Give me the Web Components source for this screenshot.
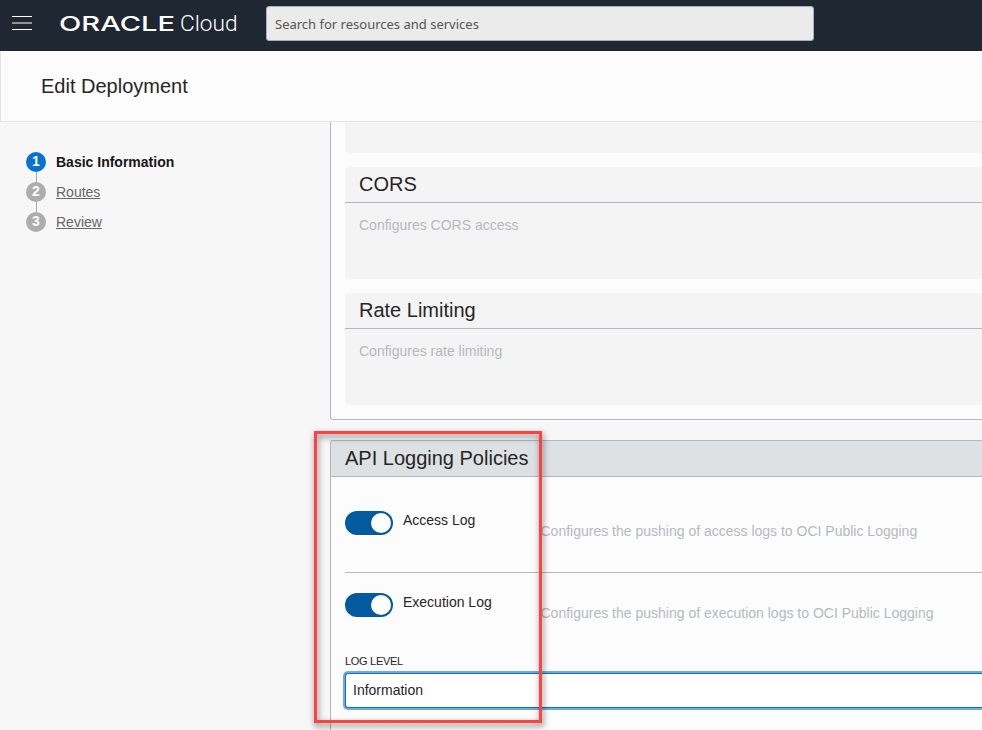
<!DOCTYPE html>
<html lang="en">
<head>
<meta charset="utf-8">
<title>Edit Deployment</title>
<style>
html,body{margin:0;height:730px;overflow:hidden;background:#f7f7f7}
body{font:14px/20px "Liberation Sans",Arial,sans-serif;color:#262626}
</style>
</head>
<body>
<deployment-page></deployment-page>
<script>
const define = (name, markup) => {
  const template = document.createElement('template');
  template.innerHTML = `<style>*{box-sizing:border-box}:host{display:block;box-sizing:border-box}</style>` + markup;
  customElements.define(name, class extends HTMLElement {
    constructor() {
      super();
      this.attachShadow({mode: 'open'}).append(template.content.cloneNode(true));
    }
  });
};

define('cloud-header', `
<style>
:host{display:flex;height:51px;background:#1e2732;padding:6px 0 0 12px;align-items:flex-start}
.menu{display:block;width:20px;height:16px;margin-top:9px}
.brand{display:block;width:190px;height:30px;margin:2px 0 0 22px}
.search{width:548px;height:35px;margin-left:22px;border:1px solid #a9afbd;border-radius:3px;background:#ebebeb;
 padding:0 8px;font:13px/34px "Noto Sans","Open Sans",sans-serif;color:#565656}
</style>
<svg class="menu" viewBox="0 0 20 16"><path d="M0 1.5h20M0 14.5h20" stroke="#fff"/><path d="M0 8h20" stroke="#8f9499" stroke-width="2"/></svg>
<svg class="brand" viewBox="54 8 190 30" fill="#fff">
 <text x="59" y="31" font-family="Inter,sans-serif" font-size="20.6" font-weight="500" textLength="116" lengthAdjust="spacingAndGlyphs">ORACLE</text>
 <text x="180" y="31" font-family="Roboto,sans-serif" font-size="22.5" font-weight="300" textLength="57.5" lengthAdjust="spacingAndGlyphs">Cloud</text>
</svg>
<div class="search">Search for resources and services</div>`);

define('page-title', `
<style>
:host{height:71px;background:#fcfcfc;border-left:1px solid #e4e4e4;border-bottom:1px solid #e4e4e4;padding:0 40px}
h1{margin:0;font-size:20px;line-height:70px;font-weight:400}
</style><h1><slot></slot></h1>`);

define('wizard-step', `
<style>
:host{display:flex;height:30px;align-items:flex-start;gap:10px;color:#666}
.rail{display:flex;flex-direction:column;align-items:center;width:20px;height:30px}
.num{width:20px;height:20px;border-radius:50%;background:#adadad;color:#fff;font-weight:700;text-align:center;line-height:19px;flex:none}
.line{width:1px;height:10px;background:#a8a8a8}
.label{text-decoration:underline;text-underline-offset:1px}
:host([current]) .num{background:#0572ce}
:host([current]) .label{font-weight:700;color:#161616;text-decoration:none}
:host([last]) .line{display:none}
</style>
<div class="rail"><div class="num"><slot name="number"></slot></div><div class="line"></div></div>
<span class="label"><slot></slot></span>`);

define('policy-card', `
<style>
:host{height:112px;background:#f4f4f4;border-radius:3px;flex:none}
h2{margin:0;height:36px;padding:0 14px;font-size:20px;line-height:34px;font-weight:400;border-bottom:1px solid #b0b8c1}
p{margin:0;padding:12px 14px;color:#b4b9c1}
</style><h2><slot name="title"></slot></h2><p><slot></slot></p>`);

define('form-panel', `
<style>
:host{border:1px solid #b0b8c1;border-right:0;border-radius:3px 0 0 3px;background:#fcfcfc;overflow:hidden}
</style><slot></slot>`);

define('panel-heading', `
<style>
:host{height:36px;padding-left:14px;background:#dde1e4;border-bottom:1px solid #b0b8c1;font-size:20px;line-height:34px}
</style><slot></slot>`);

define('log-toggle', `
<style>
:host{display:grid;grid-template-columns:48px 128px 1fr;column-gap:10px;height:82px;align-items:start;white-space:nowrap}
.switch{display:flex;justify-content:flex-end;align-items:center;width:48px;height:24px;padding-right:2px;border-radius:12px;background:#045a9f}
.knob{width:20px;height:20px;border-radius:50%;background:#fff}
.name{margin-top:-1px}
.hint{margin:10px 0 0 -0.5px;color:#b4b9c1}
</style>
<div class="switch"><div class="knob"></div></div>
<div class="name"><slot></slot></div>
<div class="hint"><slot name="hint"></slot></div>`);

define('select-field', `
<style>
label{display:block;font-size:11px;line-height:14px;height:19px;letter-spacing:-.3px}
.control{height:35px;border:1px solid #0572ce;border-right:0;border-radius:3px 0 0 3px;box-shadow:0 0 0 2px #76a8dd;background:#fff;padding-left:7px;line-height:33px}
</style>
<label><slot name="label"></slot></label><div class="control"><slot></slot></div>`);

define('focus-frame', `
<style>
:host{position:absolute;left:314px;top:431px;width:228px;height:292px;border:3px solid #fd4242;
 filter:drop-shadow(1px 3px 3px rgba(0,0,0,.55))}
</style>`);

define('deployment-page', `
<style>
:host{width:982px;height:730px;overflow:hidden;position:relative;background:#f7f7f7}
.body{display:grid;grid-template-columns:304px 1fr;padding-left:26px;height:608px;overflow:hidden}
nav{padding-top:30px}
main{display:flex;flex-direction:column;gap:20px}
.policies{height:298px;flex:none;border-top:0;border-radius:0 0 0 3px}
.stack{display:flex;flex-direction:column;gap:14px;padding-left:14px}
.tail{height:31px;background:#f4f4f4;border-radius:0 0 0 3px}
.logging{height:320px;flex:none}
.fields{padding:34px 0 0 14px}
.rule{height:1px;background:#b0b8c1;margin:-21px 0 20px}
select-field{margin-top:-21px}
</style>
<cloud-header></cloud-header>
<page-title>Edit Deployment</page-title>
<div class="body">
 <nav>
  <wizard-step current><span slot="number">1</span>Basic Information</wizard-step>
  <wizard-step><span slot="number">2</span>Routes</wizard-step>
  <wizard-step last><span slot="number">3</span>Review</wizard-step>
 </nav>
 <main>
  <form-panel class="policies"><div class="stack">
   <div class="tail"></div>
   <policy-card><span slot="title">CORS</span>Configures CORS access</policy-card>
   <policy-card><span slot="title">Rate Limiting</span>Configures rate limiting</policy-card>
  </div></form-panel>
  <form-panel class="logging">
   <panel-heading>API Logging Policies</panel-heading>
   <div class="fields">
    <log-toggle>Access Log<span slot="hint">Configures the pushing of access logs to OCI Public Logging</span></log-toggle>
    <div class="rule"></div>
    <log-toggle>Execution Log<span slot="hint">Configures the pushing of execution logs to OCI Public Logging</span></log-toggle>
    <select-field><span slot="label">LOG LEVEL</span>Information</select-field>
   </div>
  </form-panel>
 </main>
</div>
<focus-frame></focus-frame>`);
</script>
</body>
</html>
